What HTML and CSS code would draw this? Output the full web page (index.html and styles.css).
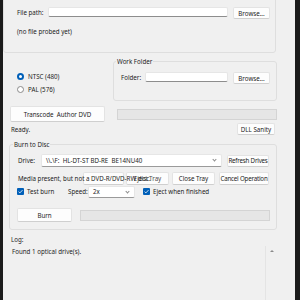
FILE: index.html
```html
<!DOCTYPE html>
<html>
<head>
<meta charset="utf-8">
<link rel="stylesheet" href="styles.css">
</head>
<body>
<div class="window">

  <div class="group file-group">
    <div class="row file-row">
      <span class="lbl file-lbl">File path:</span>
      <div class="input file-input"></div>
      <button class="btn btn-browse">Browse...</button>
    </div>
    <div class="note">(no file probed yet)</div>
  </div>

  <div class="options">
    <div class="radios">
      <div class="radio-item"><span class="radio checked"></span>NTSC (480)</div>
      <div class="radio-item"><span class="radio"></span>PAL (576)</div>
    </div>
    <div class="group work-group">
      <span class="group-title">Work Folder</span>
      <div class="row">
        <span class="lbl folder-lbl">Folder:</span>
        <div class="input folder-input"></div>
        <button class="btn btn-browse">Browse...</button>
      </div>
    </div>
  </div>

  <div class="row transcode-row">
    <button class="btn btn-transcode">Transcode  Author DVD</button>
    <div class="progress transcode-progress"></div>
  </div>

  <div class="row status-row">
    <span class="status">Ready.</span>
    <button class="btn btn-dll">DLL Sanity</button>
  </div>

  <div class="group burn-group">
    <span class="group-title">Burn to Disc</span>
    <div class="row drive-row">
      <span class="lbl drive-lbl">Drive:</span>
      <div class="combo drive-combo">\\.\F:  HL-DT-ST BD-RE  BE14NU40<span class="chev"></span></div>
      <button class="btn btn-refresh">Refresh Drives</button>
    </div>
    <div class="row tray-row">
      <button class="btn btn-media"></button>
      <button class="btn btn-eject"><span class="eject-text">Eject Tray</span></button>
      <button class="btn btn-close">Close Tray</button>
      <button class="btn btn-cancel">Cancel Operation</button>
      <span class="media-msg">Media present, but not a DVD-R/DVD-RW disc.</span>
    </div>
    <div class="row opts-row">
      <span class="check-item test-item"><span class="check"><svg viewBox="0 0 8 8"><polyline points="1.8,4.2 3.3,5.6 6.3,2.4" /></svg></span>Test burn</span>
      <span class="lbl speed-lbl">Speed:</span>
      <div class="combo speed-combo">2x<span class="chev"></span></div>
      <span class="check-item eject-item"><span class="check"><svg viewBox="0 0 8 8"><polyline points="1.8,4.2 3.3,5.6 6.3,2.4" /></svg></span>Eject when finished</span>
    </div>
    <div class="row burn-row">
      <button class="btn btn-burn">Burn</button>
      <div class="progress burn-progress"></div>
    </div>
  </div>

  <div class="log-lbl">Log:</div>
  <div class="log">
    <div class="log-text">Found 1 optical drive(s).</div>
    <div class="scroll"><span class="arrow"></span></div>
  </div>

</div>
</body>
</html>
```

FILE: styles.css
```css
body {
  margin: 0;
  background: #1b1b1b;
  font-family: "Noto Sans", "Open Sans", sans-serif;
  font-size: 6.2px;
  color: #1c1c1c;
}

.window {
  width: 292px;
  height: 300px;
  margin-left: 3px;
  background: #f0f0f0;
  overflow: hidden;
  display: flex;
  flex-direction: column;
}

.row {
  display: flex;
  align-items: center;
}

.group {
  position: relative;
  box-sizing: border-box;
  border: 1px solid #dedede;
  border-radius: 3px;
}

.group-title {
  position: absolute;
  top: -5px;
  left: 2px;
  padding: 0 1px;
  line-height: 9px;
  background: #f0f0f0;
}

.lbl {
  flex: none;
  white-space: nowrap;
}

.input {
  box-sizing: border-box;
  height: 10px;
  background: #fff;
  border: 1px solid #e6e6e6;
  border-bottom-color: #8d8d8d;
  border-radius: 2px;
}

.btn {
  box-sizing: border-box;
  height: 12px;
  padding: 0;
  font: inherit;
  color: #1c1c1c;
  background: #fdfdfd;
  border: 1px solid #e3e3e3;
  border-bottom-color: #cfcfcf;
  border-radius: 2px;
  white-space: pre;
}

.progress {
  box-sizing: border-box;
  height: 11px;
  background: #e6e6e6;
  border: 1px solid #d4d4d4;
}

.combo {
  position: relative;
  box-sizing: border-box;
  height: 13px;
  line-height: 11px;
  padding-left: 4px;
  background: #fff;
  border: 1px solid #e6e6e6;
  border-bottom-color: #9a9a9a;
  border-radius: 2px;
  white-space: pre;
}

.chev {
  position: absolute;
  right: 5px;
  top: 3px;
  width: 2px;
  height: 2px;
  border-right: 1px solid #8a8a8a;
  border-bottom: 1px solid #8a8a8a;
  transform: rotate(45deg);
}

/* file group */
.file-group {
  margin-top: -6px;
  width: 273px;
  height: 59px;
  padding: 12px 0 0 13px;
}

.file-row {
  align-items: flex-start;
}

.file-lbl {
  width: 31px;
  line-height: 11px;
}

.file-input {
  width: 180px;
}

.btn-browse {
  margin-left: 5px;
  width: 37px;
}

.note {
  margin-top: 8px;
  line-height: 9px;
}

/* options */
.options {
  display: flex;
  margin-top: 8px;
  height: 40px;
}

.radios {
  width: 110px;
  box-sizing: border-box;
  padding: 9px 0 0 14px;
}

.radio-item {
  display: flex;
  align-items: center;
  height: 13px;
}

.radio {
  box-sizing: border-box;
  width: 7px;
  height: 7px;
  margin-right: 4px;
  border: 1px solid #8a8a8a;
  border-radius: 50%;
  background: #fff;
}

.radio.checked {
  border: 2px solid #005fb8;
  background: #fff;
}

.work-group {
  width: 164px;
  height: 40px;
  padding: 10px 0 0 7px;
}

.work-group .row {
  align-items: flex-start;
}

.folder-lbl {
  width: 24px;
  line-height: 11px;
}

.folder-input {
  width: 83px;
}

/* transcode */
.transcode-row {
  margin-top: 5px;
  height: 16px;
}

.btn-transcode {
  margin-left: 7px;
  width: 95px;
  height: 16px;
}

.transcode-progress {
  margin-left: 12px;
  width: 160px;
}

.status-row {
  height: 14px;
}

.status {
  margin-left: 8px;
}

.btn-dll {
  margin-left: auto;
  margin-right: 20px;
  width: 38px;
}

/* burn group */
.burn-group {
  margin: 8px 0 0 6px;
  width: 268px;
  height: 86px;
  padding: 9px 0 0 8px;
}

.burn-group .group-title {
  left: 3px;
}

.drive-row {
  height: 13px;
}

.drive-lbl {
  width: 23px;
}

.drive-combo {
  width: 181px;
}

.btn-refresh {
  margin-left: 5px;
  width: 42px;
  letter-spacing: -0.2px;
}

.tray-row {
  position: relative;
  margin-top: 5px;
  height: 13px;
}

.tray-row .btn {
  height: 13px;
  margin-left: 3px;
}

.btn-media {
  width: 41px;
  margin-left: 65px !important;
}

.btn-eject {
  width: 43px;
  margin-left: 2px !important;
}

.eject-text {
  color: #4a4a4a;
}

.btn-close {
  width: 43px;
}

.btn-cancel {
  width: 50px;
  margin-left: 4px !important;
  letter-spacing: -0.2px;
}

.media-msg {
  position: absolute;
  left: 0;
  top: 2px;
  line-height: 9px;
  white-space: nowrap;
}

.opts-row {
  height: 13px;
}

.check-item {
  display: flex;
  align-items: center;
  white-space: nowrap;
}

.check {
  display: block;
  width: 7px;
  height: 7px;
  margin-right: 3px;
  background: #005fb8;
  border-radius: 1px;
}

.check svg {
  display: block;
  width: 7px;
  height: 7px;
  fill: none;
  stroke: #fff;
  stroke-width: 0.9;
}

.test-item {
  margin-left: -1px;
  width: 51px;
}

.speed-lbl {
  width: 20px;
}

.speed-combo {
  width: 47px;
  height: 12px;
  line-height: 10px;
}

.eject-item {
  margin-left: 8px;
}

.burn-row {
  margin-top: 10px;
  height: 14px;
}

.btn-burn {
  margin-left: -1px;
  width: 55px;
  height: 14px;
}

.burn-progress {
  margin-left: 8px;
  width: 190px;
}

/* log */
.log-lbl {
  margin: 5px 0 0 8px;
  line-height: 9px;
}

.log {
  flex: 1;
  display: flex;
  margin: 2px 18px 0 6px;
}

.log-text {
  flex: 1;
  padding: 1px 0 0 3px;
  line-height: 9px;
}

.scroll {
  width: 11px;
  border-left: 1px solid #e4e4e4;
  display: flex;
  justify-content: center;
}

.arrow {
  margin-top: 4px;
  width: 0;
  height: 0;
  border-left: 2px solid transparent;
  border-right: 2px solid transparent;
  border-bottom: 2px solid #8a8a8a;
}
```
